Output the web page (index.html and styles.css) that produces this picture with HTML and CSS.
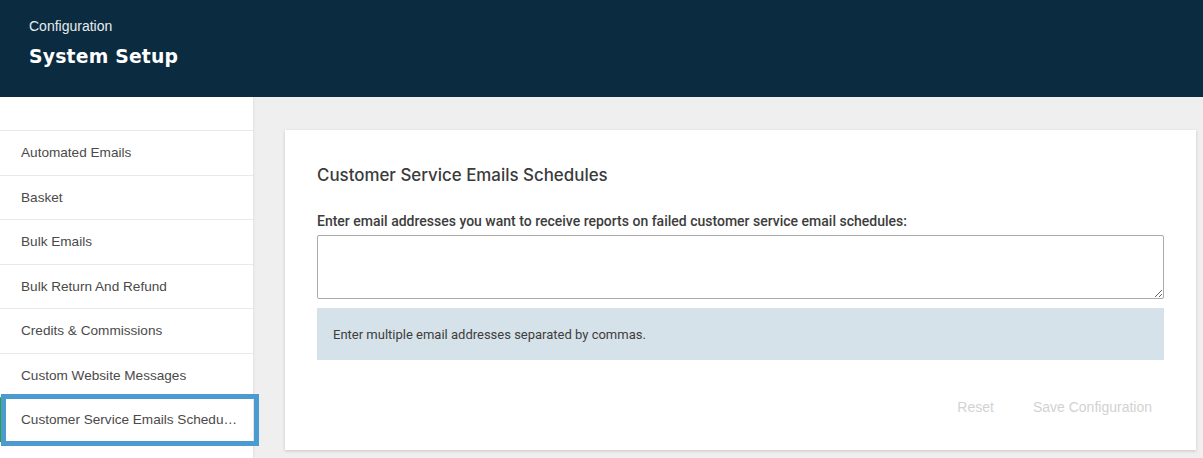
FILE: index.html
```html
<!DOCTYPE html>
<html lang="en">
<head>
<meta charset="utf-8">
<title>System Setup</title>
<link rel="stylesheet" href="styles.css">
</head>
<body>
<header class="page-header">
  <div class="crumb">Configuration</div>
  <h1 class="page-title">System Setup</h1>
</header>
<div class="layout">
  <nav class="sidebar">
    <ul class="nav-list">
      <li class="nav-item"><span class="nav-label">Automated Emails</span></li>
      <li class="nav-item"><span class="nav-label">Basket</span></li>
      <li class="nav-item"><span class="nav-label">Bulk Emails</span></li>
      <li class="nav-item"><span class="nav-label">Bulk Return And Refund</span></li>
      <li class="nav-item"><span class="nav-label">Credits &amp; Commissions</span></li>
      <li class="nav-item"><span class="nav-label">Custom Website Messages</span></li>
      <li class="nav-item is-active"><span class="nav-label" title="Customer Service Emails Schedules">Customer Service Emails Schedules</span></li>
    </ul>
  </nav>
  <main class="content">
    <section class="card">
      <h2 class="card-title">Customer Service Emails Schedules</h2>
      <label class="field-label" for="report-emails">Enter email addresses you want to receive reports on failed customer service email schedules:</label>
      <textarea id="report-emails" class="field-input"></textarea>
      <div class="hint">Enter multiple email addresses separated by commas.</div>
      <div class="actions">
        <button class="btn" type="button" disabled>Reset</button>
        <button class="btn" type="button" disabled>Save Configuration</button>
      </div>
    </section>
  </main>
</div>
</body>
</html>
```

FILE: styles.css
```css
* { box-sizing: border-box; }

html, body {
  margin: 0;
  height: 100%;
}

body {
  font-family: "Liberation Sans", Arial, sans-serif;
  background: #efefef;
  color: #444;
  overflow: hidden;
}

.page-header {
  background: #0b2b40;
  height: 97px;
  padding: 17px 29px 0;
  color: #fff;
}

.crumb {
  font-size: 14px;
  line-height: 18px;
  color: #e6ebef;
}

.page-title {
  margin: 10px 0 0;
  font-family: "DejaVu Sans", Verdana, sans-serif;
  font-weight: bold;
  font-size: 18.8px;
  line-height: 24px;
  letter-spacing: 0.2px;
}

.layout {
  display: flex;
  height: calc(100% - 97px);
}

/* left navigation */
.sidebar {
  width: 253px;
  flex: none;
  background: #fff;
  padding-top: 33px;
  box-shadow: 1px 0 2px rgba(0, 0, 0, 0.06);
  position: relative;
  z-index: 1;
}

.nav-list {
  list-style: none;
  margin: 0;
  padding: 0;
}

.nav-item {
  position: relative;
  height: 44.5px;
  padding: 0 14px 0 21px;
  border-top: 1px solid #e9e9e9;
  font-size: 13.6px;
  line-height: 43px;
  color: #4a4a4a;
}

.nav-label {
  display: block;
  white-space: nowrap;
  overflow: hidden;
  text-overflow: ellipsis;
}

.nav-item.is-active {
  border-left: 2px solid #2f9e3a;
  padding-left: 19px;
}

/* focus ring around the current entry */
.nav-item.is-active::after {
  content: "";
  position: absolute;
  left: -1px;
  right: -6px;
  top: -4px;
  bottom: -4px;
  border: 5px solid #4b9bd0;
  pointer-events: none;
}

/* main panel */
.content {
  flex: 1;
  padding: 33px 8px 0 32px;
}

.card {
  background: #fff;
  box-shadow: 0 1px 3px rgba(0, 0, 0, 0.18);
  padding: 34px 32px 30px;
  height: 320px;
}

.card-title {
  margin: 0 0 26px;
  font-family: Inter, "Noto Sans", sans-serif;
  font-weight: 500;
  font-size: 16.9px;
  line-height: 22px;
  color: #3b3b3b;
}

.field-label {
  display: block;
  font-family: Roboto, sans-serif;
  font-weight: 500;
  font-size: 14px;
  line-height: 18px;
  color: #3d3d3d;
  margin-bottom: 5px;
}

.field-input {
  display: block;
  width: 847px;
  height: 64px;
  border: 1px solid #aaa;
  border-radius: 2px;
  resize: vertical;
  font-family: Roboto, sans-serif;
  margin: 0;
}

.hint {
  margin-top: 9px;
  width: 847px;
  height: 52px;
  background: #d6e2e9;
  padding: 0 16px;
  display: flex;
  align-items: center;
  font-family: Roboto, sans-serif;
  font-size: 13px;
  color: #3d3d3d;
}

.actions {
  display: flex;
  justify-content: flex-end;
  gap: 15px;
  width: 847px;
  margin-top: 37px;
}

.btn {
  background: none;
  border: 0;
  padding: 0 12px;
  font-family: "Liberation Sans", Arial, sans-serif;
  font-size: 14px;
  line-height: 20px;
  color: #d2d2d2;
}
```
